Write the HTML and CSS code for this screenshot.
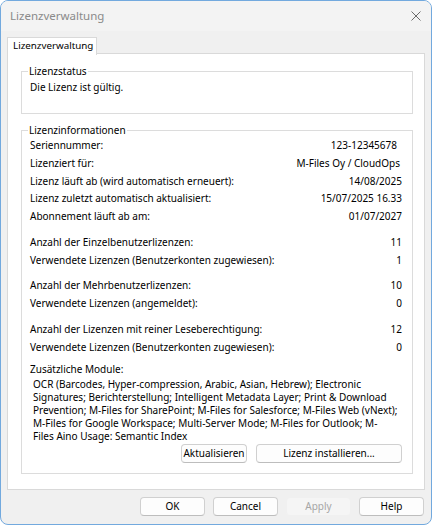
FILE: index.html
```html
<!DOCTYPE html>
<html lang="de">
<head>
<meta charset="utf-8">
<title>Lizenzverwaltung</title>
<link rel="stylesheet" href="styles.css">
</head>
<body>
<div class="window">
  <div class="titlebar">
    <span class="title">Lizenzverwaltung</span>
    <span class="close" aria-label="Schließen">
      <svg width="10" height="10" viewBox="0 0 10 10"><path d="M0.5 0.5 L9.5 9.5 M9.5 0.5 L0.5 9.5" stroke="#6b6b6b" stroke-width="1" fill="none"/></svg>
    </span>
  </div>
  <div class="client">
    <div class="tabs">
      <div class="tab">Lizenzverwaltung</div>
    </div>
    <div class="panel">
      <fieldset class="group group-status">
        <legend>Lizenzstatus</legend>
        <div class="status">Die Lizenz ist gültig.</div>
      </fieldset>
      <fieldset class="group group-info">
        <legend>Lizenzinformationen</legend>
        <div class="rows">
          <div class="row"><span>Seriennummer:</span><span class="val val-serial">123-12345678</span></div>
          <div class="row"><span>Lizenziert für:</span><span class="val val-owner">M-Files Oy / CloudOps</span></div>
          <div class="row"><span>Lizenz läuft ab (wird automatisch erneuert):</span><span class="val">14/08/2025</span></div>
          <div class="row"><span>Lizenz zuletzt automatisch aktualisiert:</span><span class="val">15/07/2025 16.33</span></div>
          <div class="row"><span>Abonnement läuft ab am:</span><span class="val">01/07/2027</span></div>
        </div>
        <div class="rows sep">
          <div class="row"><span>Anzahl der Einzelbenutzerlizenzen:</span><span class="val">11</span></div>
          <div class="row"><span>Verwendete Lizenzen (Benutzerkonten zugewiesen):</span><span class="val">1</span></div>
        </div>
        <div class="rows sep">
          <div class="row"><span>Anzahl der Mehrbenutzerlizenzen:</span><span class="val">10</span></div>
          <div class="row"><span>Verwendete Lizenzen (angemeldet):</span><span class="val">0</span></div>
        </div>
        <div class="rows sep">
          <div class="row"><span>Anzahl der Lizenzen mit reiner Leseberechtigung:</span><span class="val">12</span></div>
          <div class="row"><span>Verwendete Lizenzen (Benutzerkonten zugewiesen):</span><span class="val">0</span></div>
        </div>
        <div class="row modules-label"><span>Zusätzliche Module:</span></div>
        <div class="modules">OCR (Barcodes, Hyper-compression, Arabic, Asian, Hebrew); Electronic<br>Signatures; Berichterstellung; Intelligent Metadata Layer; Print &amp; Download<br>Prevention; M-Files for SharePoint; M-Files for Salesforce; M-Files Web (vNext);<br>M-Files for Google Workspace; Multi-Server Mode; M-Files for Outlook; M-<br>Files Aino Usage: Semantic Index</div>
        <div class="group-buttons">
          <button class="btn btn-update">Aktualisieren</button>
          <button class="btn btn-install">Lizenz installieren...</button>
        </div>
      </fieldset>
    </div>
    <div class="dialog-buttons">
      <button class="btn btn-dlg">OK</button>
      <button class="btn btn-dlg">Cancel</button>
      <button class="btn btn-dlg" disabled>Apply</button>
      <button class="btn btn-dlg">Help</button>
    </div>
  </div>
</div>
</body>
</html>
```

FILE: styles.css
```css
* { box-sizing: border-box; }
html, body {
  margin: 0;
  padding: 0;
  background: #ffffff;
}
body {
  font-family: "Noto Sans", "Open Sans", sans-serif;
  font-size: 10px;
  color: #000;
}
.window {
  width: 432px;
  height: 525px;
  border: 1px solid #72a9de;
  border-radius: 8px;
  background: #f0f0f0;
  overflow: hidden;
  display: flex;
  flex-direction: column;
}
.titlebar {
  height: 30px;
  flex: none;
  background: #f3f3f3;
  display: flex;
  align-items: center;
  justify-content: space-between;
  padding: 0 10px 0 9px;
}
.title {
  font-size: 11.5px;
  color: #8a8a8a;
  margin-top: -1px;
}
.close {
  display: flex;
  width: 10px;
  height: 10px;
}
.client {
  flex: 1;
  padding: 6px 6px 0 6px;
  display: flex;
  flex-direction: column;
}
.tabs {
  display: flex;
  height: 17px;
  flex: none;
  position: relative;
  z-index: 1;
  margin-bottom: -1px;
}
.tab {
  width: 90px;
  height: 18px;
  background: #ffffff;
  border: 1px solid #d9d9d9;
  border-bottom: none;
  line-height: 16px;
  padding-left: 5px;
  font-size: 9.8px;
}
.panel {
  height: 437px;
  flex: none;
  background: #ffffff;
  border: 1px solid #d9d9d9;
  padding: 10px 11px 0 13px;
}
.group {
  margin: 0;
  border: 1px solid #dcdcdc;
  padding: 0 10px 0 8px;
  min-width: 0;
}
.group legend {
  padding: 0 1px;
  margin-left: -2px;
  line-height: 14px;
  height: 14px;
}
.group-status {
  height: 50px;
}
.status {
  margin-top: 2px;
  line-height: 14px;
}
.group-info {
  margin-top: 9px;
  padding-bottom: 10px;
}
.row {
  display: flex;
  justify-content: space-between;
  height: 17.75px;
  line-height: 17.75px;
  white-space: nowrap;
}
.rows.sep {
  margin-top: 8px;
}
.val-serial { padding-right: 5px; }
.val-owner { padding-right: 2px; }
.modules-label {
  margin-top: 5px;
}
.modules {
  margin-top: -1px;
  padding-left: 3px;
  line-height: 13px;
  white-space: nowrap;
}
.group-buttons {
  display: flex;
  justify-content: flex-end;
  gap: 9px;
  margin-top: 1px;
}
.btn {
  font-family: inherit;
  font-size: 10px;
  color: #000;
  height: 19px;
  padding: 0;
  background: #fdfdfd;
  border: 1px solid #d0d0d0;
  border-bottom-color: #bdbdbd;
  border-radius: 4px;
  line-height: 17px;
}
.btn-update { width: 66px; }
.btn-install { width: 146px; }
.dialog-buttons {
  display: flex;
  justify-content: flex-end;
  gap: 8px;
  margin-top: 7px;
  padding-right: 1px;
}
.btn-dlg { width: 65px; }
.btn-dlg:disabled {
  background: #f5f5f5;
  border-color: #f0f0f0;
  color: #a6a6a6;
}
```
